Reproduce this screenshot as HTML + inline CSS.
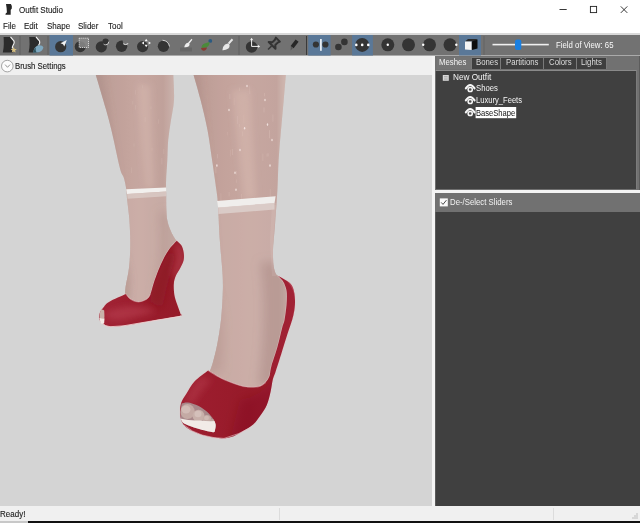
<!DOCTYPE html>
<html><head><meta charset="utf-8">
<style>
*{box-sizing:border-box;margin:0;padding:0}
html,body{width:640px;height:523px;overflow:hidden;background:#fff;font-family:"Liberation Sans",sans-serif;}
.a{position:absolute}
.t{position:absolute;white-space:nowrap;line-height:1;font-family:"Liberation Sans",sans-serif;-webkit-font-smoothing:antialiased;will-change:transform}
</style></head><body>
<!-- title bar -->
<div class="a" style="left:0;top:0;width:640px;height:33px;background:#fff"></div>
<svg class="a" style="left:0;top:0" width="16" height="18" viewBox="0 0 16 18"><path d="M6,3.9 L10.9,3.9 Q12.6,6.2 11.8,8.6 L10.7,10 L10.7,14.7 L5.4,14.7 Q5.5,13.2 6.9,12.6 L6.6,8Z" fill="#262626"/></svg>
<svg class="a" style="left:550px;top:0" width="90" height="20" viewBox="550 0 90 20">
<rect x="559.5" y="9" width="7.2" height="0.9" fill="#222"/>
<rect x="590.4" y="6.4" width="6.2" height="6.2" fill="none" stroke="#222" stroke-width="0.9"/>
<path d="M620.8,6.4 L627.3,12.9 M627.3,6.4 L620.8,12.9" stroke="#222" stroke-width="0.9"/>
</svg>
<div class="t" style="left:18.5px;top:7px;font-size:8px;color:#1a1a1a;-webkit-text-stroke:0.1px #1a1a1a;transform:scaleY(1.1);transform-origin:0 80%">Outfit Studio</div>
<div class="t" style="left:3px;top:23px;font-size:8px;color:#1a1a1a;-webkit-text-stroke:0.1px #1a1a1a;transform:scaleY(1.1);transform-origin:0 80%">File</div>
<div class="t" style="left:24px;top:23px;font-size:8px;color:#1a1a1a;-webkit-text-stroke:0.1px #1a1a1a;transform:scaleY(1.1);transform-origin:0 80%">Edit</div>
<div class="t" style="left:47px;top:23px;font-size:8px;color:#1a1a1a;-webkit-text-stroke:0.1px #1a1a1a;transform:scaleY(1.1);transform-origin:0 80%">Shape</div>
<div class="t" style="left:78px;top:23px;font-size:8px;color:#1a1a1a;-webkit-text-stroke:0.1px #1a1a1a;transform:scaleY(1.1);transform-origin:0 80%">Slider</div>
<div class="t" style="left:108px;top:23px;font-size:8px;color:#1a1a1a;-webkit-text-stroke:0.1px #1a1a1a;transform:scaleY(1.1);transform-origin:0 80%">Tool</div>
<!-- toolbar -->

<svg class="a" style="left:0;top:33px" width="640" height="24" viewBox="0 33 640 24">
<rect x="0" y="33" width="640" height="2" fill="#d9d9d9"/>
<rect x="0" y="35" width="640" height="20.6" fill="#727272"/>
<!-- separators -->
<rect x="19.5" y="36" width="1" height="19" fill="#5e5e5e"/>
<rect x="47.5" y="36" width="1" height="19" fill="#5e5e5e"/>
<rect x="238.5" y="36" width="1" height="19" fill="#5e5e5e"/>
<rect x="306" y="36" width="1" height="19" fill="#3a3a3a"/>
<rect x="483.5" y="36" width="1" height="19" fill="#626262"/>
<!-- blue buttons -->
<rect x="49.6" y="35" width="23.4" height="20.5" fill="#5a7898"/>
<rect x="308.2" y="35" width="22.4" height="20.5" fill="#5a7898"/>
<rect x="352.1" y="35" width="20.8" height="20.5" fill="#5a7898"/>
<rect x="459" y="35" width="22" height="20.5" fill="#5a7898"/>
<!-- icon1 foot star -->
<path d="M3.6,37 L10.5,37 Q13,40 14.5,43 Q13,46 12.5,48 L13,52.5 L2.8,52.5 Q3.8,48 3.8,44 Q3.8,40 3.6,37Z" fill="#2b2b2b"/>
<path d="M10.5,36.8 Q12,38.5 14,41 Q15,43.5 13,45.5 Q12,47 12.5,48.5" stroke="#f2f2f2" stroke-width="1.2" fill="none"/>
<path d="M13.7,46.8 L14.6,48.9 L16.8,49 L15.1,50.4 L15.7,52.6 L13.7,51.4 L11.8,52.6 L12.4,50.4 L10.7,49 L12.9,48.9Z" fill="#d8c080"/>
<!-- icon2 foot water -->
<path d="M29.2,37 L36,37 Q38.5,40 40,43 Q38.5,46 38,48 L38.5,52.5 L28.6,52.5 Q29.6,48 29.6,44 Q29.6,40 29.2,37Z" fill="#2b2b2b"/>
<path d="M36,36.8 Q37.5,38.5 39.5,41 Q40.5,43.5 38.5,45.5" stroke="#f2f2f2" stroke-width="1.2" fill="none"/>
<path d="M33.2,52.6 Q33.8,47 38,45.2 Q42.5,44.8 43.4,47.5 Q42.5,51.5 38,52.6Z" fill="#7ea8bf"/><path d="M33.2,52.6 Q33.8,49 36,47.5 Q35,50 36.5,52.6Z" fill="#2f5560"/>
<!-- icon3 brush pointer -->
<circle cx="60.7" cy="46.7" r="5.6" fill="#343434"/>
<path d="M66.8,40.1 L60.5,43.2 L63,44.3 L64.3,46.6Z" fill="#f4f4f4"/>
<!-- icon4 mask -->
<circle cx="80.2" cy="46.7" r="5.5" fill="#343434"/>
<rect x="79.2" y="38.2" width="9.3" height="9.3" fill="#8a8a8a" fill-opacity="0.85" stroke="#e8e8e8" stroke-width="0.8" stroke-dasharray="1.2 0.8"/>
<!-- icon5 inflate -->
<circle cx="101.3" cy="46.9" r="5.6" fill="#343434"/>
<circle cx="105.6" cy="41.6" r="3.2" fill="#343434" stroke="#e8e8e8" stroke-width="0.8" stroke-dasharray="7 20"/>
<!-- icon6 deflate -->
<circle cx="121.6" cy="46.3" r="5.7" fill="#343434"/>
<circle cx="126" cy="41.6" r="3.2" fill="#727272"/>
<path d="M123.3,43.8 Q125.5,45.5 128.2,43.6" stroke="#eeeeee" stroke-width="1" fill="none"/>
<!-- icon7 move -->
<circle cx="142.6" cy="46.6" r="5.6" fill="#343434"/>
<path d="M146.2,38.8 L147.8,41.2 L144.6,41.2Z M151,43 L148.6,44.6 L148.6,41.4Z M146.2,47.2 L144.6,44.8 L147.8,44.8Z M141.6,43 L144,41.4 L144,44.6Z" fill="#f4f4f4"/>
<!-- icon8 smooth -->
<circle cx="163.5" cy="46.3" r="5.7" fill="#343434"/>
<path d="M162.5,40.2 Q168.5,40.8 169.5,46.5" stroke="#e0e0e0" stroke-width="0.9" fill="none"/>
<!-- icon9 brush -->
<rect x="180" y="47.5" width="12" height="4" fill="#666"/>
<path d="M191.6,38.8 L192.4,39.8 L189.4,43.5 L188.2,42.4Z" fill="#eeeeee"/>
<path d="M188.6,42.6 Q190.6,44.6 188.5,46.6 Q186.6,47.6 184.2,47.2 Q184.6,44.6 186.4,43.2Z" fill="#eeeeee"/>
<!-- icon10 color brush -->
<circle cx="210.3" cy="40.9" r="1.9" fill="#2a5a80"/>
<path d="M209.5,42 Q210,45 206.5,47.5 L201.5,48 Q201.5,44.8 204.5,43.5 Q207,42.5 209.5,42Z" fill="#4a8a3a"/>
<path d="M201,48 L207,47.6 Q206.5,50.5 203.5,50.8 Q201.4,50.4 201,48Z" fill="#8a3a32"/>
<!-- icon11 alpha brush -->
<path d="M231.8,38.6 L233.2,40 L229.4,44.2 L228,42.8Z" fill="#e6e6e6"/>
<path d="M228.4,43.2 Q230.8,45.8 228.4,48.4 Q225.6,50.4 222.4,50.2 Q222.6,46.6 225,44.6Z" fill="#e6e6e6"/>
<!-- icon13 transform -->
<circle cx="251.6" cy="47" r="5.8" fill="#343434"/>
<path d="M251.6,39 L251.6,46.4 L259,46.4" stroke="#f4f4f4" stroke-width="1" fill="none"/>
<path d="M251.6,37.8 L250.2,40 L253,40Z M260.2,46.4 L258,45 L258,47.8Z" fill="#f4f4f4"/>
<!-- icon14 pin -->
<g transform="rotate(45 273 44.5)">
<path d="M270.2,37.6 L275.8,37.6 L275,39.8 L275,43.2 L277.8,45.8 L268.2,45.8 L271,43.2 L271,39.8Z" fill="#6a6a6a" stroke="#333" stroke-width="2" stroke-linejoin="round"/>
<rect x="272.2" y="46" width="1.6" height="5.5" fill="#3a3a3a"/>
</g>
<!-- icon15 pen -->
<path d="M295.6,39.6 L298.6,41.8 L293.6,48.2 L290.6,46Z" fill="#262626"/>
<path d="M290.8,46.4 L293,48 L290.6,50.4Z" fill="#555"/>
<!-- icon17 -->
<circle cx="315.9" cy="44.5" r="3.1" fill="#343434"/>
<circle cx="325.4" cy="44.5" r="3.1" fill="#343434"/>
<rect x="320" y="39" width="1.8" height="11.8" fill="#e8eef4"/>
<!-- icon18 -->
<circle cx="344.4" cy="41.9" r="3.3" fill="#343434"/>
<circle cx="338.4" cy="47" r="3.3" fill="#343434"/>
<!-- icon19 -->
<circle cx="362.2" cy="44.9" r="7" fill="#343434"/>
<circle cx="356.3" cy="44.9" r="1.3" fill="#fff"/>
<circle cx="362.2" cy="44.9" r="1.3" fill="#fff"/>
<circle cx="368.3" cy="44.9" r="1.3" fill="#fff"/>
<!-- icon20-23 -->
<circle cx="387.8" cy="44.8" r="6.5" fill="#343434"/>
<circle cx="387.8" cy="44.8" r="1.2" fill="#fff"/>
<circle cx="408.5" cy="44.8" r="6.5" fill="#343434"/>
<circle cx="429.5" cy="44.8" r="6.5" fill="#343434"/>
<circle cx="423.2" cy="44.8" r="1.2" fill="#fff"/>
<circle cx="450" cy="44.8" r="6.5" fill="#343434"/>
<circle cx="456.3" cy="44.8" r="1.2" fill="#fff"/>
<!-- cube -->
<path d="M465,41.5 L468,39 L477.5,39 L474.5,41.5Z" fill="#2a2a2a"/>
<path d="M465,41.5 L471.8,41.5 L471.8,50 L465,49.5Z" fill="#f4f4f4"/>
<path d="M471.8,41.5 L477.5,39.5 L477.5,48.5 L471.8,50Z" fill="#0e0e0e"/>
<!-- slider -->
<rect x="492.5" y="43.8" width="56.3" height="1.6" fill="#f0f0f0"/>
<rect x="515" y="39.5" width="6.3" height="10.5" rx="2" fill="#1a7fe0"/>
</svg>
<div class="t" style="left:556px;top:41.5px;font-size:7.8px;color:#fafafa;transform:scaleY(1.1);transform-origin:0 80%">Field of View: 65</div>

<!-- left header -->
<div class="a" style="left:0;top:56px;width:434px;height:19px;background:#f0f0f0"></div>
<svg class="a" style="left:0;top:58px" width="15" height="16" viewBox="0 58 15 16"><circle cx="7.3" cy="66.1" r="5.8" fill="#fcfcfc" stroke="#9a9a9a" stroke-width="0.9"/><path d="M5.1,64.6 L7.5,67.3 L10,64.6" stroke="#8a8a8a" stroke-width="0.9" fill="none"/></svg>
<div class="t" style="left:14.5px;top:62.5px;font-size:7.8px;color:#1a1a1a;-webkit-text-stroke:0.1px #1a1a1a;transform:scaleY(1.1);transform-origin:0 80%">Brush Settings</div>
<!-- viewport -->
<div class="a" style="left:0;top:75px;width:432px;height:431px;background:#d4d4d4;overflow:hidden"><!--SCENE--><svg width="432" height="431" viewBox="0 75 432 431" style="display:block"><defs>
<linearGradient id="sk1" gradientUnits="userSpaceOnUse" x1="95" y1="0" x2="175" y2="0">
<stop offset="0" stop-color="#ac8c84"/><stop offset="0.25" stop-color="#b7948c"/><stop offset="0.55" stop-color="#be9b93"/><stop offset="0.85" stop-color="#b7958d"/><stop offset="1" stop-color="#c4aaa3"/>
</linearGradient>
<linearGradient id="sk2" gradientUnits="userSpaceOnUse" x1="193" y1="0" x2="287" y2="0">
<stop offset="0" stop-color="#b08c84"/><stop offset="0.3" stop-color="#ba968e"/><stop offset="0.6" stop-color="#be9b93"/><stop offset="0.9" stop-color="#ba9891"/><stop offset="1" stop-color="#c8afa8"/>
</linearGradient>
<linearGradient id="lo1" x1="0" y1="0" x2="1" y2="0">
<stop offset="0" stop-color="#b8978d"/><stop offset="0.35" stop-color="#c8aaa0"/><stop offset="0.7" stop-color="#c9aba1"/><stop offset="1" stop-color="#c0a096"/>
</linearGradient>
<linearGradient id="rd1" gradientUnits="userSpaceOnUse" x1="100" y1="300" x2="185" y2="300">
<stop offset="0" stop-color="#a22436"/><stop offset="0.5" stop-color="#9a1c2c"/><stop offset="1" stop-color="#951a28"/>
</linearGradient>
<linearGradient id="rd2" gradientUnits="userSpaceOnUse" x1="180" y1="0" x2="295" y2="0">
<stop offset="0" stop-color="#9e1e30"/><stop offset="0.6" stop-color="#971a29"/><stop offset="1" stop-color="#a22336"/>
</linearGradient>
</defs><path d="M95.5,74.0 C96.8,78.3 101.0,92.3 103.2,100.0 C105.4,107.7 107.2,113.3 108.9,120.0 C110.7,126.7 112.2,133.3 113.7,140.0 C115.2,146.7 116.8,154.7 118.0,160.0 C119.2,165.3 120.0,169.0 121.0,172.0 C122.0,175.0 123.0,175.2 123.9,178.0 C124.8,180.8 125.7,185.3 126.2,189.0 C126.8,192.7 126.7,194.8 127.2,200.0 C127.7,205.2 128.9,212.5 129.4,220.0 C129.9,227.5 130.4,237.0 130.3,245.0 C130.2,253.0 129.8,261.0 129.0,268.0 C128.2,275.0 126.3,281.7 125.6,287.0 C124.9,292.3 125.1,297.8 125.0,300.0 L130.0,303.0 C135.0,303.0 153.7,308.5 160.0,303.0 C166.3,297.5 165.3,280.4 168.0,270.0 C170.7,259.6 175.0,245.5 176.4,240.6 L176.4,240.6 C175.9,240.0 174.8,238.7 173.7,236.8 C172.6,234.9 171.0,231.9 169.9,229.1 C168.8,226.3 167.8,223.2 167.2,220.0 C166.6,216.8 166.6,214.2 166.4,210.0 C166.2,205.8 166.2,200.0 166.2,195.0 C166.1,190.0 165.9,185.8 166.1,180.0 C166.3,174.2 167.0,166.7 167.3,160.0 C167.7,153.3 167.6,146.7 168.2,140.0 C168.8,133.3 170.0,126.7 171.0,120.0 C172.0,113.3 173.6,107.7 174.0,100.0 C174.4,92.3 173.4,78.3 173.3,74.0Z" fill="url(#sk1)"/><path d="M193.3,74.0 C194.5,78.3 198.2,90.7 200.6,100.0 C203.0,109.3 205.6,120.0 207.5,130.0 C209.4,140.0 210.6,150.0 212.1,160.0 C213.6,170.0 215.4,182.5 216.4,190.0 C217.4,197.5 217.4,196.7 218.0,205.0 C218.6,213.3 219.0,228.3 219.8,240.0 C220.6,251.7 222.1,265.8 222.6,275.0 C223.1,284.2 223.0,287.5 222.7,295.0 C222.4,302.5 221.9,311.7 221.0,320.0 C220.1,328.3 218.6,337.2 217.2,344.6 C215.8,352.0 213.8,359.4 212.3,364.5 C210.8,369.6 208.7,373.2 208.0,375.0 L208.0,392.0 C213.3,393.0 230.9,398.0 240.0,398.0 C249.1,398.0 257.6,395.7 262.5,392.0 C267.4,388.3 268.1,380.2 269.5,376.0 C270.9,371.8 269.9,371.7 271.2,366.9 C272.5,362.1 275.5,353.7 277.4,347.1 C279.2,340.5 281.1,331.7 282.3,327.2 C283.5,322.7 283.8,323.7 284.5,320.0 C285.2,316.3 286.1,309.5 286.5,305.0 C286.9,300.5 287.0,296.1 286.8,293.0 C286.6,289.9 286.1,288.5 285.4,286.4 C284.7,284.3 283.8,282.4 282.5,280.6 C281.2,278.8 278.6,276.6 277.8,275.8 L277.8,275.8 C277.4,275.3 276.1,274.9 275.4,273.0 C274.7,271.1 273.8,268.2 273.4,264.4 C273.0,260.6 272.9,254.1 273.0,250.0 C273.1,245.9 273.4,244.2 273.7,240.0 C274.0,235.8 274.4,233.3 275.0,225.0 C275.6,216.7 276.8,200.8 277.4,190.0 C278.0,179.2 278.0,170.0 278.6,160.0 C279.2,150.0 280.1,140.0 281.0,130.0 C281.9,120.0 282.9,109.3 283.7,100.0 C284.5,90.7 285.6,78.3 286.0,74.0Z" fill="url(#sk2)"/><clipPath id="cl1"><path d="M95.5,74.0 C96.8,78.3 101.0,92.3 103.2,100.0 C105.4,107.7 107.2,113.3 108.9,120.0 C110.7,126.7 112.2,133.3 113.7,140.0 C115.2,146.7 116.8,154.7 118.0,160.0 C119.2,165.3 120.0,169.0 121.0,172.0 C122.0,175.0 123.0,175.2 123.9,178.0 C124.8,180.8 125.7,185.3 126.2,189.0 C126.8,192.7 126.7,194.8 127.2,200.0 C127.7,205.2 128.9,212.5 129.4,220.0 C129.9,227.5 130.4,237.0 130.3,245.0 C130.2,253.0 129.8,261.0 129.0,268.0 C128.2,275.0 126.3,281.7 125.6,287.0 C124.9,292.3 125.1,297.8 125.0,300.0 L130.0,303.0 C135.0,303.0 153.7,308.5 160.0,303.0 C166.3,297.5 165.3,280.4 168.0,270.0 C170.7,259.6 175.0,245.5 176.4,240.6 L176.4,240.6 C175.9,240.0 174.8,238.7 173.7,236.8 C172.6,234.9 171.0,231.9 169.9,229.1 C168.8,226.3 167.8,223.2 167.2,220.0 C166.6,216.8 166.6,214.2 166.4,210.0 C166.2,205.8 166.2,200.0 166.2,195.0 C166.1,190.0 165.9,185.8 166.1,180.0 C166.3,174.2 167.0,166.7 167.3,160.0 C167.7,153.3 167.6,146.7 168.2,140.0 C168.8,133.3 170.0,126.7 171.0,120.0 C172.0,113.3 173.6,107.7 174.0,100.0 C174.4,92.3 173.4,78.3 173.3,74.0Z"/></clipPath><clipPath id="cl2"><path d="M193.3,74.0 C194.5,78.3 198.2,90.7 200.6,100.0 C203.0,109.3 205.6,120.0 207.5,130.0 C209.4,140.0 210.6,150.0 212.1,160.0 C213.6,170.0 215.4,182.5 216.4,190.0 C217.4,197.5 217.4,196.7 218.0,205.0 C218.6,213.3 219.0,228.3 219.8,240.0 C220.6,251.7 222.1,265.8 222.6,275.0 C223.1,284.2 223.0,287.5 222.7,295.0 C222.4,302.5 221.9,311.7 221.0,320.0 C220.1,328.3 218.6,337.2 217.2,344.6 C215.8,352.0 213.8,359.4 212.3,364.5 C210.8,369.6 208.7,373.2 208.0,375.0 L208.0,392.0 C213.3,393.0 230.9,398.0 240.0,398.0 C249.1,398.0 257.6,395.7 262.5,392.0 C267.4,388.3 268.1,380.2 269.5,376.0 C270.9,371.8 269.9,371.7 271.2,366.9 C272.5,362.1 275.5,353.7 277.4,347.1 C279.2,340.5 281.1,331.7 282.3,327.2 C283.5,322.7 283.8,323.7 284.5,320.0 C285.2,316.3 286.1,309.5 286.5,305.0 C286.9,300.5 287.0,296.1 286.8,293.0 C286.6,289.9 286.1,288.5 285.4,286.4 C284.7,284.3 283.8,282.4 282.5,280.6 C281.2,278.8 278.6,276.6 277.8,275.8 L277.8,275.8 C277.4,275.3 276.1,274.9 275.4,273.0 C274.7,271.1 273.8,268.2 273.4,264.4 C273.0,260.6 272.9,254.1 273.0,250.0 C273.1,245.9 273.4,244.2 273.7,240.0 C274.0,235.8 274.4,233.3 275.0,225.0 C275.6,216.7 276.8,200.8 277.4,190.0 C278.0,179.2 278.0,170.0 278.6,160.0 C279.2,150.0 280.1,140.0 281.0,130.0 C281.9,120.0 282.9,109.3 283.7,100.0 C284.5,90.7 285.6,78.3 286.0,74.0Z"/></clipPath><path clip-path="url(#cl1)" d="M100,194.9 L170,192.1 L190,192 L190,320 L100,320Z" fill="#d0b8b2" fill-opacity="0.3"/><path clip-path="url(#cl2)" d="M200,207.8 L274.5,202.9 L300,202 L300,400 L200,400Z" fill="#d0b8b2" fill-opacity="0.3"/><filter id="bl1" x="-50%" y="-50%" width="200%" height="200%"><feGaussianBlur stdDeviation="0.7"/></filter><filter id="bl3" x="-50%" y="-50%" width="200%" height="200%"><feGaussianBlur stdDeviation="3"/></filter><filter id="bl5" x="-50%" y="-50%" width="200%" height="200%"><feGaussianBlur stdDeviation="5"/></filter><g clip-path="url(#cl2)"><path d="M260,262 Q268,310 258,385 L290,385 L290,262Z" fill="#94706a" fill-opacity="0.42" filter="url(#bl5)"/><path d="M272,205 L276,205 L273,240 L274,265 L277,276 L272,276 L270,240Z" fill="#e6d6d2" fill-opacity="0.12" filter="url(#bl1)"/><path d="M232,90 Q238,150 244,200 L256,198 Q252,140 250,90Z" fill="#dcbcb2" fill-opacity="0.35" filter="url(#bl3)"/><path d="M186,70 L200,70 Q210,150 220,300 L205,300Z" fill="#8e6a62" fill-opacity="0.2" filter="url(#bl3)"/></g><g clip-path="url(#cl1)"><path d="M158,212 Q164,250 154,295 L190,295 L190,212Z" fill="#9c766e" fill-opacity="0.3" filter="url(#bl5)"/><path d="M138,85 Q142,150 146,188 L154,188 Q152,140 150,85Z" fill="#dcbcb2" fill-opacity="0.35" filter="url(#bl3)"/><path d="M88,70 L102,70 Q120,150 130,300 L115,300Z" fill="#8e6a62" fill-opacity="0.2" filter="url(#bl3)"/></g><g clip-path="url(#cl2)"><path d="M215,290 Q228,320 222,372 L206,372 L210,290Z" fill="#9c766e" fill-opacity="0.3" filter="url(#bl5)"/></g><g clip-path="url(#cl1)"><path d="M122,250 Q136,275 128,300 L118,300 L120,250Z" fill="#9c766e" fill-opacity="0.25" filter="url(#bl3)"/></g><g fill="#f6eeee" fill-opacity="0.15"><rect clip-path="url(#cl1)" x="80" y="70" width="120" height="240"/><rect clip-path="url(#cl2)" x="180" y="70" width="120" height="330"/></g><g clip-path="url(#cl2)"><rect x="233.8" y="98.1" width="0.8" height="6.9" fill="#e2c8c0" fill-opacity="0.21"/><rect x="238.9" y="123.9" width="0.8" height="3.3" fill="#e2c8c0" fill-opacity="0.30"/><rect x="226.9" y="132.0" width="0.8" height="3.4" fill="#e2c8c0" fill-opacity="0.22"/><rect x="236.2" y="179.2" width="0.8" height="3.7" fill="#e2c8c0" fill-opacity="0.24"/><rect x="241.1" y="193.7" width="0.8" height="6.5" fill="#e2c8c0" fill-opacity="0.28"/><rect x="249.4" y="85.6" width="0.8" height="8.2" fill="#e2c8c0" fill-opacity="0.26"/><rect x="229.5" y="94.1" width="0.8" height="4.9" fill="#e2c8c0" fill-opacity="0.36"/><rect x="230.3" y="149.8" width="0.8" height="6.8" fill="#e2c8c0" fill-opacity="0.27"/><rect x="239.1" y="87.5" width="0.8" height="3.4" fill="#e2c8c0" fill-opacity="0.24"/><rect x="242.3" y="131.3" width="0.8" height="4.9" fill="#e2c8c0" fill-opacity="0.32"/><rect x="236.9" y="116.0" width="0.8" height="7.8" fill="#e2c8c0" fill-opacity="0.34"/><rect x="231.9" y="148.9" width="0.8" height="6.2" fill="#e2c8c0" fill-opacity="0.38"/><rect x="243.5" y="114.6" width="0.8" height="8.9" fill="#e2c8c0" fill-opacity="0.22"/><rect x="236.0" y="170.9" width="0.8" height="3.9" fill="#e2c8c0" fill-opacity="0.30"/><rect x="262.5" y="153.5" width="0.8" height="7.6" fill="#e2c8c0" fill-opacity="0.31"/><rect x="272.5" y="114.5" width="0.8" height="7.2" fill="#e2c8c0" fill-opacity="0.32"/><rect x="269.0" y="130.2" width="0.8" height="8.0" fill="#e2c8c0" fill-opacity="0.39"/><rect x="267.7" y="153.1" width="0.8" height="3.4" fill="#e2c8c0" fill-opacity="0.34"/><rect x="269.8" y="189.2" width="0.8" height="7.9" fill="#e2c8c0" fill-opacity="0.26"/><rect x="266.6" y="153.6" width="0.8" height="3.1" fill="#e2c8c0" fill-opacity="0.29"/><rect x="264.0" y="92.9" width="0.8" height="3.4" fill="#e2c8c0" fill-opacity="0.35"/><rect x="263.6" y="107.2" width="0.8" height="5.3" fill="#e2c8c0" fill-opacity="0.37"/><rect x="215.5" y="167.0" width="0.8" height="6.3" fill="#e2c8c0" fill-opacity="0.38"/><rect x="228.7" y="191.8" width="0.8" height="4.7" fill="#e2c8c0" fill-opacity="0.28"/><rect x="220.5" y="193.1" width="0.8" height="8.7" fill="#e2c8c0" fill-opacity="0.23"/><rect x="217.2" y="153.9" width="0.8" height="4.4" fill="#e2c8c0" fill-opacity="0.30"/><ellipse cx="267.5" cy="124.6" rx="0.7" ry="1.3" fill="#f4e6e2" fill-opacity="0.9"/><ellipse cx="270" cy="165.6" rx="0.7" ry="1.3" fill="#f4e6e2" fill-opacity="0.9"/><ellipse cx="235" cy="172.8" rx="0.7" ry="1.3" fill="#f4e6e2" fill-opacity="0.9"/><ellipse cx="236" cy="189.7" rx="0.7" ry="1.3" fill="#f4e6e2" fill-opacity="0.9"/><ellipse cx="216.9" cy="165.6" rx="0.7" ry="1.3" fill="#f4e6e2" fill-opacity="0.9"/><ellipse cx="244.6" cy="128.2" rx="0.7" ry="1.3" fill="#f4e6e2" fill-opacity="0.9"/><ellipse cx="247" cy="86" rx="0.7" ry="1.3" fill="#f4e6e2" fill-opacity="0.9"/><ellipse cx="265" cy="100" rx="0.7" ry="1.3" fill="#f4e6e2" fill-opacity="0.9"/><ellipse cx="240" cy="150" rx="0.7" ry="1.3" fill="#f4e6e2" fill-opacity="0.9"/><ellipse cx="229" cy="110" rx="0.7" ry="1.3" fill="#f4e6e2" fill-opacity="0.9"/><ellipse cx="272" cy="140" rx="0.7" ry="1.3" fill="#f4e6e2" fill-opacity="0.9"/><rect x="280" y="74" width="5" height="130" fill="#d8c0b8" fill-opacity="0.35" filter="url(#bl3)"/></g><g clip-path="url(#cl1)"><rect x="150.6" y="106.3" width="0.8" height="3.0" fill="#dcc2ba" fill-opacity="0.3"/><rect x="144.7" y="116.9" width="0.8" height="5.3" fill="#dcc2ba" fill-opacity="0.3"/><rect x="163.4" y="149.0" width="0.8" height="5.1" fill="#dcc2ba" fill-opacity="0.3"/><rect x="151.6" y="147.6" width="0.8" height="3.2" fill="#dcc2ba" fill-opacity="0.3"/><rect x="161.5" y="158.0" width="0.8" height="6.5" fill="#dcc2ba" fill-opacity="0.3"/><rect x="157.9" y="119.2" width="0.8" height="4.6" fill="#dcc2ba" fill-opacity="0.3"/><rect x="133.6" y="143.4" width="0.8" height="3.2" fill="#dcc2ba" fill-opacity="0.3"/><rect x="132.4" y="100.9" width="0.8" height="3.6" fill="#dcc2ba" fill-opacity="0.3"/><rect x="141.9" y="85.3" width="0.8" height="3.0" fill="#dcc2ba" fill-opacity="0.3"/><rect x="135.3" y="90.1" width="0.8" height="4.5" fill="#dcc2ba" fill-opacity="0.3"/><rect x="130.9" y="167.4" width="0.8" height="5.5" fill="#dcc2ba" fill-opacity="0.3"/><rect x="135.2" y="105.2" width="0.8" height="4.4" fill="#dcc2ba" fill-opacity="0.3"/></g><path d="M126.2,189.2 L166.1,187.4 L166.3,191.6 L127.1,194Z" fill="#f2f0ee"/><path d="M127.1,194 L166.3,191.6 L166.4,196.2 L127.6,198.8Z" fill="#ddd0cc" fill-opacity="0.7"/><path d="M217,201 L275.6,196.3 L274.5,203.2 L218.2,207.8Z" fill="#f0eeec"/><path d="M218.2,207.6 L274.5,202.9 L274.5,209.5 L218.4,214Z" fill="#ddd0cc" fill-opacity="0.85"/><path d="M176.7,240.7 C177.5,241.5 180.2,243.4 181.3,245.3 C182.5,247.2 183.2,249.7 183.6,252.2 C184.0,254.7 184.2,257.5 183.6,260.2 C183.0,262.9 181.4,265.6 180.1,268.3 C178.8,271.0 176.6,273.6 175.6,276.3 C174.6,279.0 174.0,281.2 173.8,284.3 C173.6,287.4 173.9,291.7 174.4,295.0 C174.9,298.3 175.9,300.8 177.0,304.0 C178.1,307.2 180.2,312.8 180.8,314.5 L180.8,314.5 C180.6,314.8 184.3,314.9 179.4,316.0 C174.5,317.1 160.7,319.3 151.3,320.9 C141.9,322.5 130.2,324.9 123.1,325.8 C116.0,326.7 112.8,327.2 109.0,326.5 C105.2,325.8 102.2,323.7 100.6,321.6 C99.0,319.5 99.0,316.4 99.5,314.0 C100.0,311.6 101.8,309.5 103.4,307.5 C105.0,305.5 105.2,304.1 109.0,301.9 C112.8,299.7 123.2,295.4 126.0,294.1 L126.0,294.1 C126.7,294.9 128.1,297.7 130.2,299.0 C132.3,300.3 135.8,301.9 138.6,301.9 C141.4,301.9 145.0,300.3 147.0,299.0 C149.0,297.7 149.4,296.7 150.5,294.0 C151.6,291.3 152.5,286.9 153.8,283.0 C155.1,279.1 156.8,274.4 158.3,270.6 C159.8,266.8 161.2,263.6 162.9,260.2 C164.6,256.8 166.4,253.2 168.7,249.9 C171.0,246.7 175.4,242.2 176.7,240.7Z" fill="none" stroke="#e6c4c6" stroke-width="1.2" stroke-opacity="0.55"/><path d="M176.7,240.7 C177.5,241.5 180.2,243.4 181.3,245.3 C182.5,247.2 183.2,249.7 183.6,252.2 C184.0,254.7 184.2,257.5 183.6,260.2 C183.0,262.9 181.4,265.6 180.1,268.3 C178.8,271.0 176.6,273.6 175.6,276.3 C174.6,279.0 174.0,281.2 173.8,284.3 C173.6,287.4 173.9,291.7 174.4,295.0 C174.9,298.3 175.9,300.8 177.0,304.0 C178.1,307.2 180.2,312.8 180.8,314.5 L180.8,314.5 C180.6,314.8 184.3,314.9 179.4,316.0 C174.5,317.1 160.7,319.3 151.3,320.9 C141.9,322.5 130.2,324.9 123.1,325.8 C116.0,326.7 112.8,327.2 109.0,326.5 C105.2,325.8 102.2,323.7 100.6,321.6 C99.0,319.5 99.0,316.4 99.5,314.0 C100.0,311.6 101.8,309.5 103.4,307.5 C105.0,305.5 105.2,304.1 109.0,301.9 C112.8,299.7 123.2,295.4 126.0,294.1 L126.0,294.1 C126.7,294.9 128.1,297.7 130.2,299.0 C132.3,300.3 135.8,301.9 138.6,301.9 C141.4,301.9 145.0,300.3 147.0,299.0 C149.0,297.7 149.4,296.7 150.5,294.0 C151.6,291.3 152.5,286.9 153.8,283.0 C155.1,279.1 156.8,274.4 158.3,270.6 C159.8,266.8 161.2,263.6 162.9,260.2 C164.6,256.8 166.4,253.2 168.7,249.9 C171.0,246.7 175.4,242.2 176.7,240.7Z" fill="url(#rd1)"/><clipPath id="cs1"><path d="M176.7,240.7 C177.5,241.5 180.2,243.4 181.3,245.3 C182.5,247.2 183.2,249.7 183.6,252.2 C184.0,254.7 184.2,257.5 183.6,260.2 C183.0,262.9 181.4,265.6 180.1,268.3 C178.8,271.0 176.6,273.6 175.6,276.3 C174.6,279.0 174.0,281.2 173.8,284.3 C173.6,287.4 173.9,291.7 174.4,295.0 C174.9,298.3 175.9,300.8 177.0,304.0 C178.1,307.2 180.2,312.8 180.8,314.5 L180.8,314.5 C180.6,314.8 184.3,314.9 179.4,316.0 C174.5,317.1 160.7,319.3 151.3,320.9 C141.9,322.5 130.2,324.9 123.1,325.8 C116.0,326.7 112.8,327.2 109.0,326.5 C105.2,325.8 102.2,323.7 100.6,321.6 C99.0,319.5 99.0,316.4 99.5,314.0 C100.0,311.6 101.8,309.5 103.4,307.5 C105.0,305.5 105.2,304.1 109.0,301.9 C112.8,299.7 123.2,295.4 126.0,294.1 L126.0,294.1 C126.7,294.9 128.1,297.7 130.2,299.0 C132.3,300.3 135.8,301.9 138.6,301.9 C141.4,301.9 145.0,300.3 147.0,299.0 C149.0,297.7 149.4,296.7 150.5,294.0 C151.6,291.3 152.5,286.9 153.8,283.0 C155.1,279.1 156.8,274.4 158.3,270.6 C159.8,266.8 161.2,263.6 162.9,260.2 C164.6,256.8 166.4,253.2 168.7,249.9 C171.0,246.7 175.4,242.2 176.7,240.7Z"/></clipPath><g clip-path="url(#cs1)"><path d="M148,300 Q158,270 170,248 L176,256 Q168,280 162,310Z" fill="#7a1020" fill-opacity="0.35" filter="url(#bl5)"/><path d="M178,242 Q186,250 185,262 Q180,272 176,282 L172,272 Q177,258 175,246Z" fill="#c85464" fill-opacity="0.4" filter="url(#bl3)"/><path d="M104,314 Q118,306 134,306 Q148,307 156,311 Q140,317 122,320 Q110,321 104,314Z" fill="#c04a5a" fill-opacity="0.45" filter="url(#bl3)"/></g><path d="M101.5,322.5 Q105,326.6 110,326.7 L123,325.9 L151.3,321.1 L181,316.2" stroke="#f0d4d4" stroke-width="1" fill="none" stroke-opacity="0.85"/><path d="M100.9,309.5 Q103,309.2 104.2,310.6 Q104.8,316 104,322.5 Q102.5,324.2 100.6,322.5 Q98.5,316 100.9,309.5Z" fill="#c9b2aa"/><path d="M99.4,318 Q102,318.8 104.4,318.6 L104.2,323 Q102.5,324.6 100.8,323.2Z" fill="#f2eae6"/><path d="M277.8,275.8 C278.4,276.1 279.7,276.7 281.6,277.8 C283.5,278.9 287.3,280.8 289.2,282.5 C291.1,284.2 292.1,285.4 293.1,288.3 C294.1,291.2 294.9,295.6 295.0,300.0 C295.1,304.4 294.8,308.9 293.5,314.7 C292.2,320.5 289.4,328.0 287.3,334.6 C285.2,341.2 283.1,348.3 281.1,354.5 C279.1,360.7 276.9,367.8 275.5,372.0 C274.1,376.2 273.5,376.7 272.7,380.0 C271.9,383.3 271.5,387.8 270.5,392.0 C269.5,396.2 268.6,401.0 266.8,405.0 C265.1,409.0 262.3,412.8 260.0,416.0 C257.7,419.2 255.9,422.0 253.1,424.5 C250.3,427.0 246.2,429.1 243.0,431.0 C239.8,432.9 236.9,434.9 233.6,436.2 C230.3,437.4 226.3,438.3 223.0,438.5 C219.7,438.7 217.4,438.2 213.7,437.6 C210.0,437.0 205.1,436.1 200.8,434.6 C196.5,433.1 191.1,430.8 187.9,428.6 C184.8,426.5 183.2,424.4 181.9,421.7 C180.6,419.0 180.3,415.4 180.2,412.2 C180.1,409.0 180.2,405.7 181.3,402.5 C182.4,399.3 184.5,396.7 186.7,393.2 C188.9,389.7 190.9,385.3 194.5,381.5 C198.1,377.7 205.9,372.3 208.2,370.5 L208.2,370.5 C210.8,372.0 217.9,376.9 223.8,379.5 C229.7,382.1 237.7,385.2 243.4,386.4 C249.1,387.6 254.3,387.4 258.0,386.8 C261.7,386.2 263.6,384.3 265.5,382.5 C267.4,380.7 268.6,378.6 269.5,376.0 C270.4,373.4 269.9,371.7 271.2,366.9 C272.5,362.1 275.5,353.7 277.4,347.1 C279.2,340.5 281.1,331.7 282.3,327.2 C283.5,322.7 283.8,323.7 284.5,320.0 C285.2,316.3 286.1,309.5 286.5,305.0 C286.9,300.5 287.0,296.1 286.8,293.0 C286.6,289.9 286.1,288.5 285.4,286.4 C284.7,284.3 283.8,282.4 282.5,280.6 C281.2,278.8 278.6,276.6 277.8,275.8Z" fill="none" stroke="#e6c4c6" stroke-width="1.2" stroke-opacity="0.55"/><path d="M277.8,275.8 C278.4,276.1 279.7,276.7 281.6,277.8 C283.5,278.9 287.3,280.8 289.2,282.5 C291.1,284.2 292.1,285.4 293.1,288.3 C294.1,291.2 294.9,295.6 295.0,300.0 C295.1,304.4 294.8,308.9 293.5,314.7 C292.2,320.5 289.4,328.0 287.3,334.6 C285.2,341.2 283.1,348.3 281.1,354.5 C279.1,360.7 276.9,367.8 275.5,372.0 C274.1,376.2 273.5,376.7 272.7,380.0 C271.9,383.3 271.5,387.8 270.5,392.0 C269.5,396.2 268.6,401.0 266.8,405.0 C265.1,409.0 262.3,412.8 260.0,416.0 C257.7,419.2 255.9,422.0 253.1,424.5 C250.3,427.0 246.2,429.1 243.0,431.0 C239.8,432.9 236.9,434.9 233.6,436.2 C230.3,437.4 226.3,438.3 223.0,438.5 C219.7,438.7 217.4,438.2 213.7,437.6 C210.0,437.0 205.1,436.1 200.8,434.6 C196.5,433.1 191.1,430.8 187.9,428.6 C184.8,426.5 183.2,424.4 181.9,421.7 C180.6,419.0 180.3,415.4 180.2,412.2 C180.1,409.0 180.2,405.7 181.3,402.5 C182.4,399.3 184.5,396.7 186.7,393.2 C188.9,389.7 190.9,385.3 194.5,381.5 C198.1,377.7 205.9,372.3 208.2,370.5 L208.2,370.5 C210.8,372.0 217.9,376.9 223.8,379.5 C229.7,382.1 237.7,385.2 243.4,386.4 C249.1,387.6 254.3,387.4 258.0,386.8 C261.7,386.2 263.6,384.3 265.5,382.5 C267.4,380.7 268.6,378.6 269.5,376.0 C270.4,373.4 269.9,371.7 271.2,366.9 C272.5,362.1 275.5,353.7 277.4,347.1 C279.2,340.5 281.1,331.7 282.3,327.2 C283.5,322.7 283.8,323.7 284.5,320.0 C285.2,316.3 286.1,309.5 286.5,305.0 C286.9,300.5 287.0,296.1 286.8,293.0 C286.6,289.9 286.1,288.5 285.4,286.4 C284.7,284.3 283.8,282.4 282.5,280.6 C281.2,278.8 278.6,276.6 277.8,275.8Z" fill="url(#rd2)"/><clipPath id="cs2"><path d="M277.8,275.8 C278.4,276.1 279.7,276.7 281.6,277.8 C283.5,278.9 287.3,280.8 289.2,282.5 C291.1,284.2 292.1,285.4 293.1,288.3 C294.1,291.2 294.9,295.6 295.0,300.0 C295.1,304.4 294.8,308.9 293.5,314.7 C292.2,320.5 289.4,328.0 287.3,334.6 C285.2,341.2 283.1,348.3 281.1,354.5 C279.1,360.7 276.9,367.8 275.5,372.0 C274.1,376.2 273.5,376.7 272.7,380.0 C271.9,383.3 271.5,387.8 270.5,392.0 C269.5,396.2 268.6,401.0 266.8,405.0 C265.1,409.0 262.3,412.8 260.0,416.0 C257.7,419.2 255.9,422.0 253.1,424.5 C250.3,427.0 246.2,429.1 243.0,431.0 C239.8,432.9 236.9,434.9 233.6,436.2 C230.3,437.4 226.3,438.3 223.0,438.5 C219.7,438.7 217.4,438.2 213.7,437.6 C210.0,437.0 205.1,436.1 200.8,434.6 C196.5,433.1 191.1,430.8 187.9,428.6 C184.8,426.5 183.2,424.4 181.9,421.7 C180.6,419.0 180.3,415.4 180.2,412.2 C180.1,409.0 180.2,405.7 181.3,402.5 C182.4,399.3 184.5,396.7 186.7,393.2 C188.9,389.7 190.9,385.3 194.5,381.5 C198.1,377.7 205.9,372.3 208.2,370.5 L208.2,370.5 C210.8,372.0 217.9,376.9 223.8,379.5 C229.7,382.1 237.7,385.2 243.4,386.4 C249.1,387.6 254.3,387.4 258.0,386.8 C261.7,386.2 263.6,384.3 265.5,382.5 C267.4,380.7 268.6,378.6 269.5,376.0 C270.4,373.4 269.9,371.7 271.2,366.9 C272.5,362.1 275.5,353.7 277.4,347.1 C279.2,340.5 281.1,331.7 282.3,327.2 C283.5,322.7 283.8,323.7 284.5,320.0 C285.2,316.3 286.1,309.5 286.5,305.0 C286.9,300.5 287.0,296.1 286.8,293.0 C286.6,289.9 286.1,288.5 285.4,286.4 C284.7,284.3 283.8,282.4 282.5,280.6 C281.2,278.8 278.6,276.6 277.8,275.8Z"/></clipPath><g clip-path="url(#cs2)"><path d="M286,280 Q296,290 295,305 Q292,325 285,345 L289,345 Q298,320 299,300 Q297,284 288,276Z" fill="#c85a6a" fill-opacity="0.5" filter="url(#bl1)"/><path d="M240,400 Q262,396 272,380 L280,380 L275,420 L250,440 L230,440Z" fill="#7a1020" fill-opacity="0.3" filter="url(#bl5)"/><path d="M200,376 Q188,390 184,402 L194,404 Q200,392 212,380Z" fill="#c04a5a" fill-opacity="0.35" filter="url(#bl3)"/></g><path d="M208.2,370.8 Q215,375.5 223.8,379.7 Q234,384 243.4,386.6 Q252,387.5 258,387 Q263,385.5 266,382.5" stroke="#d8a8ae" stroke-width="0.9" fill="none" stroke-opacity="0.55"/><path d="M126,294.3 Q128,297.5 130.2,299.2 Q134,302 138.6,302.1 Q143,301.5 147,299.2 Q149,297 150.5,294.2" stroke="#d8a8ae" stroke-width="0.9" fill="none" stroke-opacity="0.5"/><path d="M184,425 Q192,432 202,435 L214,437.6 L224,438.4 Q240,434 250,428" stroke="#e4c0c4" stroke-width="0.9" fill="none" stroke-opacity="0.7"/><clipPath id="clt"><path d="M181.6,403.4 C182.7,403.2 185.4,402.2 187.9,402.5 C190.4,402.8 193.6,403.8 196.5,405.1 C199.4,406.4 202.5,408.3 205.1,410.3 C207.7,412.3 210.2,414.9 212.0,417.2 C213.8,419.5 215.1,421.9 215.6,424.3 C216.1,426.7 214.9,430.1 214.8,431.3 L214.8,431.3 C214.5,431.4 215.2,432.5 212.9,432.2 C210.6,431.9 205.0,430.8 200.8,429.6 C196.6,428.5 191.1,426.7 187.9,425.3 C184.7,423.9 182.9,423.2 181.7,421.0 C180.4,418.8 180.6,413.7 180.4,412.2Z"/></clipPath><path d="M181.6,403.4 C182.7,403.2 185.4,402.2 187.9,402.5 C190.4,402.8 193.6,403.8 196.5,405.1 C199.4,406.4 202.5,408.3 205.1,410.3 C207.7,412.3 210.2,414.9 212.0,417.2 C213.8,419.5 215.1,421.9 215.6,424.3 C216.1,426.7 214.9,430.1 214.8,431.3 L214.8,431.3 C214.5,431.4 215.2,432.5 212.9,432.2 C210.6,431.9 205.0,430.8 200.8,429.6 C196.6,428.5 191.1,426.7 187.9,425.3 C184.7,423.9 182.9,423.2 181.7,421.0 C180.4,418.8 180.6,413.7 180.4,412.2Z" fill="#a8888a"/><g clip-path="url(#clt)"><g filter="url(#bl1)"><ellipse cx="187.5" cy="411.5" rx="7.2" ry="7.6" fill="#c4aaa4"/><ellipse cx="198.5" cy="415.8" rx="6" ry="6" fill="#c8b0aa"/><ellipse cx="207" cy="419" rx="4.3" ry="4" fill="#c4aca6"/><ellipse cx="212.5" cy="422" rx="3" ry="3" fill="#bea69f"/><ellipse cx="186" cy="409.5" rx="4.5" ry="4" fill="#d2bcb6"/><ellipse cx="198" cy="414" rx="3.5" ry="3.2" fill="#d4c0ba"/><ellipse cx="206.5" cy="418" rx="2.4" ry="2.2" fill="#d0bab4"/></g><path d="M180,418.6 Q190,421 200,420.5 Q208,421.5 216,421 L216,433 L180,433Z" fill="#f2ebe7"/></g></svg><!--/SCENE--></div>
<div class="a" style="left:432px;top:56px;width:3px;height:450px;background:#f4f4f4"></div>
<!-- right panel -->
<div class="a" style="left:435px;top:55.5px;width:205px;height:450px;background:#717171"></div><div class="a" style="left:638.5px;top:55.5px;width:1.5px;height:137px;background:#5c5c5c"></div>
<div class="a" style="left:435px;top:69.5px;width:201.5px;height:120px;background:#404040;border:1.5px solid #6e6e6e;border-top:1.2px solid #8a8a8a;border-right:1.5px solid #7c7c7c"></div>
<!-- tabs -->
<div class="a" style="left:437px;top:57px;width:34px;height:12px;background:#747474"></div>
<div class="a" style="left:471px;top:57px;width:30px;height:12px;background:#3e3e3e;border:1px solid #7a7a7a;border-bottom:none"></div>
<div class="a" style="left:500px;top:57px;width:44px;height:12px;background:#3e3e3e;border:1px solid #7a7a7a;border-bottom:none"></div>
<div class="a" style="left:543px;top:57px;width:34px;height:12px;background:#3e3e3e;border:1px solid #7a7a7a;border-bottom:none"></div>
<div class="a" style="left:576px;top:57px;width:31px;height:12px;background:#3e3e3e;border:1px solid #7a7a7a;border-bottom:none"></div>
<div class="t" style="left:439px;top:59px;font-size:7.8px;color:#f4f4f4;transform:scaleY(1.1);transform-origin:0 80%">Meshes</div>
<div class="t" style="left:475.5px;top:59px;font-size:7.8px;color:#dcdcdc;transform:scaleY(1.1);transform-origin:0 80%">Bones</div>
<div class="t" style="left:505.5px;top:59px;font-size:7.8px;color:#dcdcdc;transform:scaleY(1.1);transform-origin:0 80%">Partitions</div>
<div class="t" style="left:549px;top:59px;font-size:7.8px;color:#dcdcdc;transform:scaleY(1.1);transform-origin:0 80%">Colors</div>
<div class="t" style="left:580.5px;top:59px;font-size:7.8px;color:#dcdcdc;transform:scaleY(1.1);transform-origin:0 80%">Lights</div>
<!-- tree -->
<svg class="a" style="left:436px;top:70px" width="200" height="120" viewBox="436 70 200 120">
<rect x="442.8" y="75" width="6" height="5.8" fill="#d8d8d8"/>
<rect x="444" y="76.3" width="3.6" height="3.2" fill="#a0a0a0"/>
<rect x="443.8" y="77.5" width="4" height="0.9" fill="#f0f0f0"/>
<path d="M465.8,88.4 Q470.2,81.6 474.6,88.4" stroke="#f6f6f6" stroke-width="2" stroke-linecap="round" fill="none"/><circle cx="470.2" cy="89.5" r="2.1" fill="#4a4a4a" stroke="#f6f6f6" stroke-width="1.5"/>
<path d="M465.8,100.4 Q470.2,93.6 474.6,100.4" stroke="#f6f6f6" stroke-width="2" stroke-linecap="round" fill="none"/><circle cx="470.2" cy="101.5" r="2.1" fill="#4a4a4a" stroke="#f6f6f6" stroke-width="1.5"/>
<path d="M465.8,112.4 Q470.2,105.6 474.6,112.4" stroke="#f6f6f6" stroke-width="2" stroke-linecap="round" fill="none"/><circle cx="470.2" cy="113.5" r="2.1" fill="#4a4a4a" stroke="#f6f6f6" stroke-width="1.5"/>
<rect x="475.6" y="107" width="40.6" height="11.2" fill="#ffffff"/>
</svg>
<div class="t" style="left:453px;top:74px;font-size:8.2px;color:#f4f4f4;transform:scaleY(1.1);transform-origin:0 80%">New Outfit</div>
<div class="t" style="left:476px;top:85px;font-size:7.7px;color:#f4f4f4;transform:scaleY(1.1);transform-origin:0 80%">Shoes</div>
<div class="t" style="left:476px;top:97px;font-size:7.6px;color:#f4f4f4;transform:scaleY(1.1);transform-origin:0 80%">Luxury_Feets</div>
<div class="t" style="left:476px;top:109.5px;font-size:7.6px;color:#111;transform:scaleY(1.1);transform-origin:0 80%">BaseShape</div>
<!-- de-select -->
<svg class="a" style="left:439px;top:198px" width="10" height="10" viewBox="0 0 10 10">
<rect x="0.8" y="0.4" width="8" height="8" fill="#fafafa"/>
<path d="M2.2,4.4 L4,6.4 L7.4,2.2" stroke="#404040" stroke-width="0.95" fill="none"/>
</svg>
<div class="t" style="left:450px;top:199px;font-size:7.8px;color:#f4f4f4;transform:scaleY(1.1);transform-origin:0 80%">De-/Select Sliders</div>

<div class="a" style="left:432px;top:189.6px;width:208px;height:3px;background:#f4f4f4"></div>
<div class="a" style="left:435px;top:212px;width:205px;height:294px;background:#404040;border-left:1.5px solid #5a5a5a"></div>
<!-- status -->
<div class="a" style="left:0;top:506px;width:640px;height:15px;background:#f0f0f0"></div>
<div class="a" style="left:28px;top:521px;width:612px;height:2px;background:#111"></div>
<div class="a" style="left:0;top:521px;width:28px;height:2px;background:#c8c8c8"></div>
<div class="a" style="left:279px;top:508px;width:1px;height:12px;background:#dcdcdc"></div>
<div class="a" style="left:553px;top:508px;width:1px;height:12px;background:#dcdcdc"></div>
<svg class="a" style="left:630px;top:512px" width="10" height="9" viewBox="630 512 10 9"><g fill="#8c8c8c"><rect x="636.5" y="513.5" width="1" height="1"/><rect x="634.5" y="515.5" width="1" height="1"/><rect x="636.5" y="515.5" width="1" height="1"/><rect x="632.5" y="517.5" width="1" height="1"/><rect x="634.5" y="517.5" width="1" height="1"/><rect x="636.5" y="517.5" width="1" height="1"/></g></svg>
<div class="t" style="left:-0.5px;top:510.5px;font-size:8px;color:#1a1a1a;-webkit-text-stroke:0.1px #1a1a1a;transform:scaleY(1.1);transform-origin:0 80%">Ready!</div>
</body></html>
